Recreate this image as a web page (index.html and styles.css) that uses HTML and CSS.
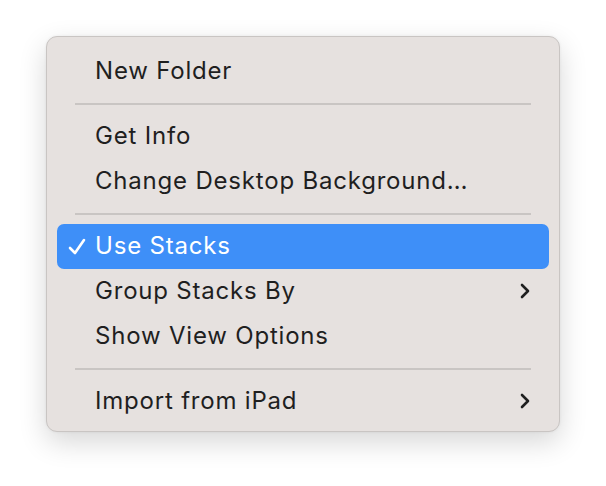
FILE: index.html
```html
<!DOCTYPE html>
<html>
<head>
<meta charset="utf-8">
<link rel="stylesheet" href="styles.css">
</head>
<body>
<div class="menu">
  <div class="item"><span class="label">New Folder</span></div>
  <div class="sep"></div>
  <div class="item"><span class="label">Get Info</span></div>
  <div class="item"><span class="label">Change Desktop Background…</span></div>
  <div class="sep"></div>
  <div class="item active">
    <svg class="check" viewBox="0 0 20 20" width="20" height="20"><path d="M3 11 L8 16 L17 3" fill="none" stroke="#fff" stroke-width="2.6" stroke-linecap="round" stroke-linejoin="round"/></svg>
    <span class="label">Use Stacks</span>
  </div>
  <div class="item"><span class="label">Group Stacks By</span>
    <svg class="chev" viewBox="0 0 12 16" width="12" height="16"><path d="M3 2 L9 8 L3 14" fill="none" stroke="#1f1f1f" stroke-width="2.6" stroke-linecap="round" stroke-linejoin="round"/></svg>
  </div>
  <div class="item"><span class="label">Show View Options</span></div>
  <div class="sep"></div>
  <div class="item"><span class="label">Import from iPad</span>
    <svg class="chev" viewBox="0 0 12 16" width="12" height="16"><path d="M3 2 L9 8 L3 14" fill="none" stroke="#1f1f1f" stroke-width="2.6" stroke-linecap="round" stroke-linejoin="round"/></svg>
  </div>
</div>
</body>
</html>
```
FILE: styles.css
```css
html, body {
  margin: 0;
  padding: 0;
  background: #ffffff;
}
body {
  width: 606px;
  height: 486px;
  font-family: Inter, "Liberation Sans", sans-serif;
}
.menu {
  position: absolute;
  left: 46px;
  top: 36px;
  width: 514px;
  height: 396px;
  box-sizing: border-box;
  padding: 12px 10px 7px 10px;
  background: #e6e1df;
  border: 1px solid #c9c5c3;
  border-radius: 11px;
  box-shadow: 0 10px 28px rgba(0,0,0,0.16), 0 0 3px rgba(0,0,0,0.06);
}
.item {
  position: relative;
  height: 45px;
  box-sizing: border-box;
  padding-bottom: 2px;
  display: flex;
  align-items: center;
  padding-left: 38px;
  padding-right: 18px;
  border-radius: 7px;
  color: #1f1f1f;
  font-size: 24px;
  letter-spacing: 0.8px;
}
.item .label {
  flex: 1;
}
.item.active {
  background: #3e8ff8;
  color: #ffffff;
}
.check {
  position: absolute;
  left: 10px;
  top: 13px;
}
.chev {
  display: block;
}
.sep {
  height: 2px;
  margin: 9px 18px 9px 18px;
  background: #c9c5c3;
}
```
